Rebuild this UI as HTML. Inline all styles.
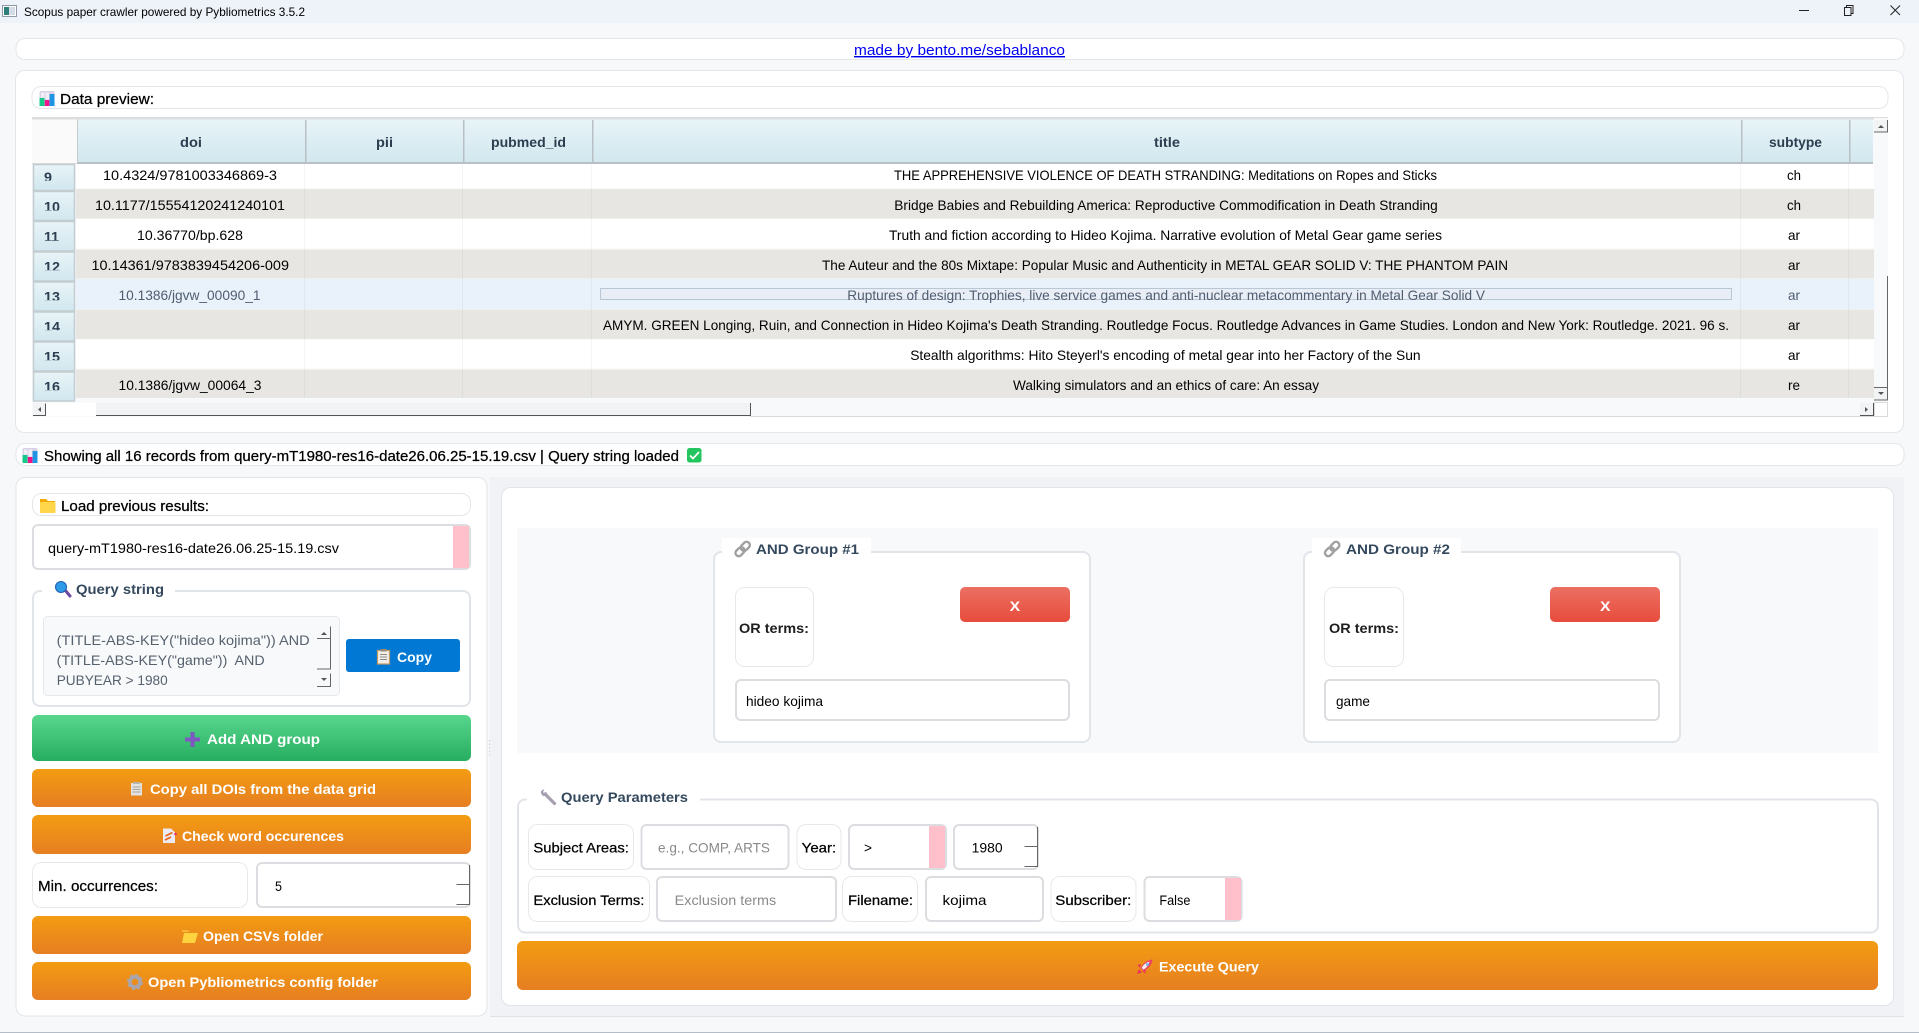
<!DOCTYPE html>
<html lang="en">
<head>
<meta charset="utf-8">
<title>Scopus paper crawler powered by Pybliometrics 3.5.2</title>
<style>
html,body{margin:0;padding:0;width:1919px;height:1033px;overflow:hidden;background:#f6f8fa}
svg.page{display:block;position:absolute;left:0;top:0}
text{font-family:"Liberation Sans",sans-serif;font-size:14px;fill:#000}
.m{stroke:#000;stroke-width:.25}
.b{font-weight:bold}
.h{font-weight:bold;fill:#2c3e50}
.w{font-weight:bold;fill:#fff}
.g{font-weight:bold;fill:#34495e}
.s{fill:#4f5d70}
.p{fill:#8a8a8a}
.q{fill:#56616e}
.l{font-weight:bold;fill:#1e1e1e;font-size:14px}
</style>
</head>
<body>
<svg class="page" xmlns="http://www.w3.org/2000/svg" width="1919" height="1033" viewBox="0 0 1919 1033">
<defs>
<linearGradient id="hd" x1="0" y1="0" x2="0" y2="1"><stop offset="0" stop-color="#e8f4f8"/><stop offset="1" stop-color="#d1e7ee"/></linearGradient>
<linearGradient id="or" x1="0" y1="0" x2="0" y2="1"><stop offset="0" stop-color="#f39c12"/><stop offset="1" stop-color="#e67e22"/></linearGradient>
<linearGradient id="gr" x1="0" y1="0" x2="0" y2="1"><stop offset="0" stop-color="#58d68d"/><stop offset="1" stop-color="#27ae60"/></linearGradient>
<linearGradient id="rd" x1="0" y1="0" x2="0" y2="1"><stop offset="0" stop-color="#ec7063"/><stop offset="1" stop-color="#e74c3c"/></linearGradient>
<g id="chart">
<rect x="-.5" y="0" width="15" height="15" rx="1.500" fill="#d9d2e6"/>
<rect x="1" y="1.500" width="3.500" height="5" fill="#f2eff6"/>
<rect x="5.500" y="1.500" width="3.500" height="7" fill="#f2eff6"/>
<rect x="-.5" y="7" width="5" height="8" fill="#17c98a"/>
<rect x="4.800" y="9" width="4.600" height="6" fill="#f0148c"/>
<rect x="9.600" y="3" width="4.900" height="12" fill="#2094e4"/>
</g>
<g id="clip">
<g fill="none" stroke="#a0a0a0" stroke-width="2.400" transform="rotate(-45 8 8)">
<rect x="-1" y="4.500" width="10" height="6.500" rx="3.200"/>
<rect x="6.500" y="4.500" width="10" height="6.500" rx="3.200"/>
</g>
</g>
</defs>

<!-- title bar -->
<rect x="0" y="0" width="1919" height="23" fill="#eef3fa"/>
<rect x="2.500" y="5.500" width="14" height="11" fill="#fff" stroke="#8f9aa6"/>
<rect x="4" y="7" width="5" height="8" fill="#2f7f7a"/>
<rect x="9" y="7" width="6" height="8" fill="#d3dde8"/>
<text x="24" y="16" style="font-size:12px" textLength="281" lengthAdjust="spacingAndGlyphs">Scopus paper crawler powered by Pybliometrics 3.5.2</text>
<path d="M1799 10.500h10" stroke="#222" stroke-width="1" fill="none"/>
<path d="M1844.500 7.500h6.500v8h-6.500zM1846.500 7.500v-2h6.500v8h-2" stroke="#222" stroke-width="1" fill="none"/>
<path d="M1890.500 5.500l9.500 9.500M1900 5.500l-9.500 9.500" stroke="#222" stroke-width="1" fill="none"/>

<!-- link bar -->
<rect x="16" y="38.500" width="1888" height="21" rx="9" fill="#fff" stroke="#e4e6ea"/>
<text x="854" y="55" textLength="211" lengthAdjust="spacingAndGlyphs" style="fill:#0000ee;font-size:14.500px" text-decoration="underline">made by bento.me/sebablanco</text>

<!-- data preview panel -->
<rect x="15.500" y="70.500" width="1888" height="362" rx="9" fill="#fff" stroke="#e3e6ea"/>
<rect x="32" y="86.500" width="1856" height="22" rx="9" fill="#fff" stroke="#e4e6ea"/>
<use href="#chart" x="40" y="91"/>
<text x="60" y="104" class="m" textLength="94" lengthAdjust="spacingAndGlyphs" style="font-size:14.500px">Data preview:</text>

<!-- table -->
<rect x="32" y="117" width="1856" height="300" fill="#f8f9fa"/>
<rect x="32" y="117" width="1856" height="2.500" fill="#dcdddf"/>
<rect x="32" y="120" width="45" height="43" fill="#fafafa"/>
<rect x="77" y="119.500" width="1796" height="43.500" fill="url(#hd)"/>
<rect x="77" y="162" width="1796" height="2" fill="#b9c0c5"/>
<rect x="77" y="119.500" width="1" height="43.500" fill="#c4cbcf"/>
<rect x="32" y="163" width="45" height="1" fill="#dddddd"/>
<g fill="#b9c0c5">
<rect x="305" y="120" width="1.500" height="43"/>
<rect x="463" y="120" width="1.500" height="43"/>
<rect x="592" y="120" width="1.500" height="43"/>
<rect x="1741" y="120" width="1.500" height="43"/>
<rect x="1849" y="120" width="1.500" height="43"/>
</g>
<text x="180" y="147" class="h" textLength="22" lengthAdjust="spacingAndGlyphs">doi</text>
<text x="376" y="147" class="h" textLength="17" lengthAdjust="spacingAndGlyphs">pii</text>
<text x="491" y="147" class="h" textLength="75" lengthAdjust="spacingAndGlyphs">pubmed_id</text>
<text x="1154" y="147" class="h" textLength="26" lengthAdjust="spacingAndGlyphs">title</text>
<text x="1769" y="147" class="h" textLength="53" lengthAdjust="spacingAndGlyphs">subtype</text>

<!-- rows -->
<rect x="76" y="164" width="1798" height="24.500" fill="#fff"/>
<rect x="76" y="189" width="1798" height="29.500" fill="#e7e6e3"/>
<rect x="76" y="219" width="1798" height="29.500" fill="#fff"/>
<rect x="76" y="249.500" width="1798" height="29" fill="#e7e6e3"/>
<rect x="76" y="279" width="1798" height="30" fill="#e9f1fb"/>
<rect x="76" y="309.500" width="1798" height="29.500" fill="#e7e6e3"/>
<rect x="76" y="339.500" width="1798" height="29" fill="#fff"/>
<rect x="76" y="369.500" width="1798" height="28.500" fill="#e7e6e3"/>
<g fill="#000" fill-opacity=".04">
<rect x="304" y="164" width="1" height="234"/>
<rect x="462" y="164" width="1" height="234"/>
<rect x="591" y="164" width="1" height="234"/>
<rect x="1740" y="164" width="1" height="234"/>
<rect x="1848" y="164" width="1" height="234"/>
</g>

<!-- row headers -->
<g stroke="#c3ccd0" stroke-width="1.500">
<rect x="33.500" y="164.500" width="41" height="26" fill="url(#hd)"/>
<rect x="33.500" y="191.500" width="41" height="29" fill="url(#hd)"/>
<rect x="33.500" y="221.500" width="41" height="29.500" fill="url(#hd)"/>
<rect x="33.500" y="252" width="41" height="29" fill="url(#hd)"/>
<rect x="33.500" y="282" width="41" height="29" fill="url(#hd)"/>
<rect x="33.500" y="312" width="41" height="29" fill="url(#hd)"/>
<rect x="33.500" y="342" width="41" height="29" fill="url(#hd)"/>
<rect x="33.500" y="372" width="41" height="29" fill="url(#hd)"/>
</g>
<svg x="44" y="172" width="20" height="8.600"><text x="0" y="9.800" class="h" textLength="8" lengthAdjust="spacingAndGlyphs">9</text></svg>
<svg x="44" y="201.700" width="20" height="8.800"><text x="0" y="9.800" class="h" textLength="16" lengthAdjust="spacingAndGlyphs">10</text></svg>
<svg x="44" y="231.700" width="20" height="9"><text x="0" y="9.800" class="h" textLength="15" lengthAdjust="spacingAndGlyphs">11</text></svg>
<svg x="44" y="261.700" width="20" height="8.600"><text x="0" y="9.800" class="h" textLength="16" lengthAdjust="spacingAndGlyphs">12</text></svg>
<svg x="44" y="291.700" width="20" height="8.600"><text x="0" y="9.800" class="h" textLength="16" lengthAdjust="spacingAndGlyphs">13</text></svg>
<svg x="44" y="321.700" width="20" height="8.600"><text x="0" y="9.800" class="h" textLength="16" lengthAdjust="spacingAndGlyphs">14</text></svg>
<svg x="44" y="351.700" width="20" height="8.600"><text x="0" y="9.800" class="h" textLength="16" lengthAdjust="spacingAndGlyphs">15</text></svg>
<svg x="44" y="381.700" width="20" height="8.600"><text x="0" y="9.800" class="h" textLength="16" lengthAdjust="spacingAndGlyphs">16</text></svg>

<!-- cells -->
<text x="103" y="180" textLength="174" lengthAdjust="spacingAndGlyphs">10.4324/9781003346869-3</text>
<text x="95" y="210" textLength="190" lengthAdjust="spacingAndGlyphs">10.1177/15554120241240101</text>
<text x="137" y="240" textLength="106" lengthAdjust="spacingAndGlyphs">10.36770/bp.628</text>
<text x="91.500" y="270" textLength="197.500" lengthAdjust="spacingAndGlyphs">10.14361/9783839454206-009</text>
<text x="118.500" y="300" class="s" textLength="142" lengthAdjust="spacingAndGlyphs">10.1386/jgvw_00090_1</text>
<text x="118.500" y="390" textLength="143" lengthAdjust="spacingAndGlyphs">10.1386/jgvw_00064_3</text>

<text x="894" y="180" textLength="543" lengthAdjust="spacingAndGlyphs">THE APPREHENSIVE VIOLENCE OF DEATH STRANDING: Meditations on Ropes and Sticks</text>
<text x="894.300" y="210" textLength="543.400" lengthAdjust="spacingAndGlyphs">Bridge Babies and Rebuilding America: Reproductive Commodification in Death Stranding</text>
<text x="889" y="240" textLength="553" lengthAdjust="spacingAndGlyphs">Truth and fiction according to Hideo Kojima. Narrative evolution of Metal Gear game series</text>
<text x="822" y="270" textLength="686" lengthAdjust="spacingAndGlyphs">The Auteur and the 80s Mixtape: Popular Music and Authenticity in METAL GEAR SOLID V: THE PHANTOM PAIN</text>
<rect x="600.500" y="288.500" width="1131" height="11" fill="#e9eef6" stroke="#b9c6d4"/>
<text x="847.300" y="300" class="s" textLength="637.700" lengthAdjust="spacingAndGlyphs">Ruptures of design: Trophies, live service games and anti-nuclear metacommentary in Metal Gear Solid V</text>
<text x="603" y="330" textLength="1126" lengthAdjust="spacingAndGlyphs">AMYM. GREEN Longing, Ruin, and Connection in Hideo Kojima's Death Stranding. Routledge Focus. Routledge Advances in Game Studies. London and New York: Routledge. 2021. 96 s.</text>
<text x="910.200" y="360" textLength="510.400" lengthAdjust="spacingAndGlyphs">Stealth algorithms: Hito Steyerl's encoding of metal gear into her Factory of the Sun</text>
<text x="1013" y="390" textLength="306" lengthAdjust="spacingAndGlyphs">Walking simulators and an ethics of care: An essay</text>

<text x="1787" y="180" textLength="14" lengthAdjust="spacingAndGlyphs">ch</text>
<text x="1787" y="210" textLength="14" lengthAdjust="spacingAndGlyphs">ch</text>
<text x="1788" y="240" textLength="12" lengthAdjust="spacingAndGlyphs">ar</text>
<text x="1788" y="270" textLength="12" lengthAdjust="spacingAndGlyphs">ar</text>
<text x="1788" y="300" class="s" textLength="12" lengthAdjust="spacingAndGlyphs">ar</text>
<text x="1788" y="330" textLength="12" lengthAdjust="spacingAndGlyphs">ar</text>
<text x="1788" y="360" textLength="12" lengthAdjust="spacingAndGlyphs">ar</text>
<text x="1788" y="390" textLength="12" lengthAdjust="spacingAndGlyphs">re</text>

<!-- table scrollbars -->
<rect x="1874" y="118" width="14" height="284" fill="#f8f9fa"/>
<rect x="1874" y="120" width="13.500" height="12" fill="#f2f3f5"/>
<path d="M1874 132h13.500v-12" fill="none" stroke="#666"/>
<path d="M1878 128l3-3 3 3z" fill="#555"/>
<path d="M1887.500 276v111" fill="none" stroke="#666"/>
<rect x="1874" y="388" width="13.500" height="12" fill="#f2f3f5"/>
<path d="M1874 387.500h13.500v12.500h-13.500" fill="none" stroke="#666"/>
<path d="M1878 392l3 3 3-3z" fill="#555"/>
<rect x="33" y="403" width="13" height="13" fill="#f2f3f5"/>
<path d="M33 415.500h12.500v-12" fill="none" stroke="#555"/>
<path d="M41 407l-3 2.500 3 2.500z" fill="#555"/>
<rect x="46" y="403" width="50" height="13" fill="#fff"/>
<rect x="96" y="403" width="654" height="13" fill="#f2f3f5"/>
<path d="M96 415.500h654.500v-12.500" fill="none" stroke="#555"/>
<rect x="1860" y="403" width="14" height="13" fill="#f2f3f5"/>
<path d="M1860 415.500h13.500v-12.500" fill="none" stroke="#555"/>
<path d="M1865 407l3 2.500-3 2.500z" fill="#555"/>
<rect x="1874.500" y="402.500" width="13" height="14" fill="#fff" stroke="#d8dadc"/>
<path d="M750 416.500h1138" stroke="#d8dadc" fill="none"/>

<!-- status bar -->
<rect x="16" y="443.500" width="1888" height="22" rx="9" fill="#fff" stroke="#e4e6ea"/>
<use href="#chart" x="23" y="448"/>
<text x="44" y="461" class="m" textLength="635" lengthAdjust="spacingAndGlyphs" style="font-size:14.500px">Showing all 16 records from query-mT1980-res16-date26.06.25-15.19.csv | Query string loaded</text>
<rect x="687" y="448" width="14.500" height="14.500" rx="2.500" fill="#22c55e"/>
<path d="M690 455.500l3 3 6-6.500" fill="none" stroke="#fff" stroke-width="1.800"/>

<!-- outer lower area -->
<rect x="490" y="477" width="1414" height="539.500" fill="#f0f2f5"/>
<path d="M490 1016.500h1414" stroke="#e0e3e6" fill="none"/>
<path d="M489.500 740v16" stroke="#cfd3d8" stroke-dasharray="1.500 2" fill="none"/>

<!-- left panel -->
<rect x="16" y="477.500" width="471" height="538.500" rx="9" fill="#fff" stroke="#e1e4e8"/>
<rect x="32.500" y="493.500" width="438" height="22" rx="9" fill="#fff" stroke="#e4e6ea"/>
<path d="M40 501v-2h6l2 2h7v3h-15z" fill="#f2a900"/>
<rect x="40" y="502" width="15.500" height="11" rx="1" fill="#ffd54a"/>
<text x="61" y="511" class="m" textLength="148" lengthAdjust="spacingAndGlyphs" style="font-size:14.500px">Load previous results:</text>

<rect x="33" y="525" width="437" height="44" rx="5" fill="#fff" stroke="#dcdde0" stroke-width="2"/>
<rect x="453" y="526" width="16" height="42" fill="#ffc0cb"/>
<text x="48" y="553" textLength="291" lengthAdjust="spacingAndGlyphs">query-mT1980-res16-date26.06.25-15.19.csv</text>

<rect x="33" y="591" width="437" height="115" rx="7" fill="#fff" stroke="#e1e5ea" stroke-width="2"/>
<rect x="42" y="582" width="133" height="14" fill="#fff"/>
<path d="M65 590l5 6" stroke="#6a4aa0" stroke-width="3" stroke-linecap="round"/>
<circle cx="61" cy="587" r="5.500" fill="#2f9be8" stroke="#1c5fb0" stroke-width="1"/>
<text x="76" y="594" class="g" textLength="88" lengthAdjust="spacingAndGlyphs">Query string</text>

<rect x="43.500" y="616.500" width="296" height="79" rx="4" fill="#f8f9fa" stroke="#e6e8eb"/>
<text x="56.700" y="645" class="q" textLength="253" lengthAdjust="spacingAndGlyphs">(TITLE-ABS-KEY("hideo kojima")) AND</text>
<text x="56.700" y="665" class="q" textLength="208" lengthAdjust="spacingAndGlyphs" xml:space="preserve">(TITLE-ABS-KEY("game"))  AND</text>
<text x="56.700" y="685" class="q" textLength="111" lengthAdjust="spacingAndGlyphs" xml:space="preserve">PUBYEAR &gt; 1980</text>
<path d="M317 638.500h13.500v-12" fill="none" stroke="#666"/>
<path d="M321 635l3-3 3 3z" fill="#555"/>
<path d="M317 669h13.500v-30" fill="none" stroke="#666"/>
<path d="M317 686.500h13.500v-13" fill="none" stroke="#666"/>
<path d="M321 678l3 3 3-3z" fill="#555"/>

<rect x="346" y="639" width="114" height="33" rx="3" fill="#0078d4"/>
<rect x="377.500" y="650.500" width="12" height="13.500" fill="#f3efe8" stroke="#c79a63" stroke-width="1.200"/>
<rect x="380.500" y="649" width="6" height="2.500" fill="#9a8a78"/>
<path d="M380 654.500h7M380 657h7M380 659.500h7" stroke="#8c8c8c" fill="none"/>
<text x="397" y="662" class="w" textLength="35" lengthAdjust="spacingAndGlyphs">Copy</text>

<rect x="32" y="715" width="439" height="46" rx="6" fill="url(#gr)"/>
<path d="M185 739.500h15M192.500 732v15" stroke="#7e57c2" stroke-width="4" fill="none"/>
<text x="207" y="744" class="w" textLength="113" lengthAdjust="spacingAndGlyphs">Add AND group</text>

<rect x="32" y="769" width="439" height="38" rx="6" fill="url(#or)"/>
<rect x="131" y="783" width="11" height="12.500" fill="#e3e2e0"/>
<rect x="133" y="782" width="7" height="2" fill="#b8b4ae"/>
<path d="M132.500 787h8M132.500 789.500h8M132.500 792h8" stroke="#a9a6a2" fill="none"/>
<text x="150" y="794" class="w" textLength="226" lengthAdjust="spacingAndGlyphs">Copy all DOIs from the data grid</text>

<rect x="32" y="815" width="439" height="39" rx="6" fill="url(#or)"/>
<path d="M163 828.500h8l4 4v10.500h-12z" fill="#eceaf2"/>
<path d="M165.500 836l7-3.500M165 840l6-3" stroke="#e8661d" stroke-width="1.800" fill="none"/>
<circle cx="175.500" cy="834" r="1.300" fill="#ee2a6b"/>
<text x="182" y="841" class="w" textLength="162" lengthAdjust="spacingAndGlyphs">Check word occurences</text>

<rect x="32.500" y="862.500" width="215" height="45" rx="9" fill="#fff" stroke="#e6e8ec"/>
<text x="38" y="891" class="m" textLength="120" lengthAdjust="spacingAndGlyphs" style="font-size:14.500px">Min. occurrences:</text>
<rect x="257" y="863" width="213" height="44" rx="5" fill="#fff" stroke="#dcdde0" stroke-width="2"/>
<text x="275" y="891" textLength="7" lengthAdjust="spacingAndGlyphs">5</text>
<path d="M469.500 865v39.500h-13M469.500 884.500h-13" fill="none" stroke="#666"/>

<rect x="32" y="916" width="439" height="38" rx="6" fill="url(#or)"/>
<path d="M182 932v-2h6l1.500 2z" fill="#f7b733"/>
<path d="M182 943l2-10h14l-3 10z" fill="#ffd23f"/>
<text x="203" y="941" class="w" textLength="120" lengthAdjust="spacingAndGlyphs">Open CSVs folder</text>

<rect x="32" y="962" width="439" height="38" rx="6" fill="url(#or)"/>
<circle cx="135" cy="982" r="5" fill="none" stroke="#a8a6ac" stroke-width="3.500"/>
<circle cx="135" cy="982" r="7" fill="none" stroke="#a8a6ac" stroke-width="2" stroke-dasharray="3 2.500"/>
<text x="148" y="987" class="w" textLength="230" lengthAdjust="spacingAndGlyphs">Open Pybliometrics config folder</text>

<!-- right panel -->
<rect x="501.500" y="487.500" width="1392" height="518" rx="9" fill="#fff" stroke="#e1e4e8"/>
<rect x="517" y="528" width="1361" height="225" fill="#f8f9fa"/>

<!-- group 1 -->
<rect x="714" y="552" width="376" height="190" rx="7" fill="#fff" stroke="#e1e5ea" stroke-width="2"/>
<rect x="722" y="538" width="149" height="16" fill="#fff"/>
<use href="#clip" x="735" y="541"/>
<text x="756" y="554" class="g" textLength="103" lengthAdjust="spacingAndGlyphs">AND Group #1</text>
<rect x="735.500" y="587.500" width="78" height="79" rx="9" fill="#fff" stroke="#e6e8ec"/>
<text x="739" y="633" class="l" textLength="70" lengthAdjust="spacingAndGlyphs">OR terms:</text>
<rect x="960" y="587" width="110" height="35" rx="5" fill="url(#rd)"/>
<text x="1009.700" y="611" class="w" textLength="10.500" lengthAdjust="spacingAndGlyphs">X</text>
<rect x="736" y="680" width="333" height="40" rx="5" fill="#fff" stroke="#dcdde0" stroke-width="2"/>
<text x="746" y="706" textLength="77" lengthAdjust="spacingAndGlyphs">hideo kojima</text>

<!-- group 2 -->
<rect x="1304" y="552" width="376" height="190" rx="7" fill="#fff" stroke="#e1e5ea" stroke-width="2"/>
<rect x="1312" y="538" width="149" height="16" fill="#fff"/>
<use href="#clip" x="1324.500" y="541"/>
<text x="1346" y="554" class="g" textLength="104" lengthAdjust="spacingAndGlyphs">AND Group #2</text>
<rect x="1324.500" y="587.500" width="79" height="79" rx="9" fill="#fff" stroke="#e6e8ec"/>
<text x="1329" y="633" class="l" textLength="70" lengthAdjust="spacingAndGlyphs">OR terms:</text>
<rect x="1550" y="587" width="110" height="35" rx="5" fill="url(#rd)"/>
<text x="1600" y="611" class="w" textLength="10.500" lengthAdjust="spacingAndGlyphs">X</text>
<rect x="1325" y="680" width="334" height="40" rx="5" fill="#fff" stroke="#dcdde0" stroke-width="2"/>
<text x="1336" y="706" textLength="34" lengthAdjust="spacingAndGlyphs">game</text>

<!-- query parameters -->
<rect x="518" y="799.500" width="1360" height="133" rx="7" fill="#fff" stroke="#e1e5ea" stroke-width="2"/>
<rect x="527" y="790" width="173" height="14" fill="#fff"/>
<path d="M545 794l9.500 9.500" stroke="#a79fb0" stroke-width="3.200" stroke-linecap="round" fill="none"/>
<path d="M541 793.500c-.5-2.500 1-4 3.500-4l-1.500 2.500 1.500 1.500 2.500-1.500c0 3-2 4.500-4 4z" fill="#a79fb0"/>
<text x="561" y="802" class="g" textLength="127" lengthAdjust="spacingAndGlyphs">Query Parameters</text>

<g fill="#fff" stroke="#e6e8ec">
<rect x="528.500" y="824.500" width="105" height="45" rx="9"/>
<rect x="797" y="824.500" width="44" height="45" rx="9"/>
<rect x="528.500" y="876.500" width="121" height="45" rx="9"/>
<rect x="842.500" y="876.500" width="75" height="45" rx="9"/>
<rect x="1051" y="876.500" width="85" height="45" rx="9"/>
</g>
<g fill="#fff" stroke="#dcdde0" stroke-width="2">
<rect x="641.500" y="825" width="147" height="44" rx="5"/>
<rect x="849" y="825" width="97" height="44" rx="5"/>
<rect x="954" y="825" width="84" height="44" rx="5"/>
<rect x="657" y="877" width="179" height="44" rx="5"/>
<rect x="926" y="877" width="117" height="44" rx="5"/>
<rect x="1144.500" y="877" width="97" height="44" rx="5"/>
</g>
<rect x="929" y="826" width="16" height="42" fill="#ffc0cb"/>
<rect x="1225" y="878" width="16" height="42" fill="#ffc0cb"/>
<path d="M1037.500 827v39.500h-13M1037.500 846.500h-13" fill="none" stroke="#666"/>

<text x="533.400" y="852.600" class="m" textLength="95.500" lengthAdjust="spacingAndGlyphs">Subject Areas:</text>
<text x="658" y="852.600" class="p" textLength="112" lengthAdjust="spacingAndGlyphs">e.g., COMP, ARTS</text>
<text x="801.700" y="852.600" class="m" textLength="34.500" lengthAdjust="spacingAndGlyphs">Year:</text>
<text x="864" y="852.600" textLength="8" lengthAdjust="spacingAndGlyphs">&gt;</text>
<text x="971.600" y="852.600" textLength="31" lengthAdjust="spacingAndGlyphs">1980</text>
<text x="533.400" y="905" class="m" textLength="111" lengthAdjust="spacingAndGlyphs">Exclusion Terms:</text>
<text x="674.700" y="905" class="p" textLength="101.500" lengthAdjust="spacingAndGlyphs">Exclusion terms</text>
<text x="848" y="905" class="m" textLength="65" lengthAdjust="spacingAndGlyphs">Filename:</text>
<text x="942.500" y="905" textLength="44" lengthAdjust="spacingAndGlyphs">kojima</text>
<text x="1055.300" y="905" class="m" textLength="76" lengthAdjust="spacingAndGlyphs">Subscriber:</text>
<text x="1159.400" y="905" textLength="31" lengthAdjust="spacingAndGlyphs">False</text>

<rect x="517" y="941" width="1361" height="49" rx="6" fill="url(#or)"/>
<path d="M1139 969l-2 5 5-1.500zM1141 964l-3.500 1 2.500 3zM1146 970l-1 3.500-2.500-2.500z" fill="#e8345a"/>
<path d="M1152.500 959.500c-5.500.5-9 3.500-12 8.500l3 3c5-3 8.500-6 9-11.500z" fill="#ee3f66"/>
<path d="M1149.500 961.500c-3.500 1-6 3.200-7.800 6.300l1.800 1.800c3-1.800 5.200-4.300 6-8.100z" fill="#f4eef0"/>
<circle cx="1147.500" cy="964.500" r="1.500" fill="#6db8e8"/>
<text x="1159" y="971.500" class="w" textLength="100" lengthAdjust="spacingAndGlyphs">Execute Query</text>

<!-- bottom line -->
<rect x="0" y="1032" width="1919" height="1" fill="#b4bcc8"/>
</svg>
</body>
</html>
